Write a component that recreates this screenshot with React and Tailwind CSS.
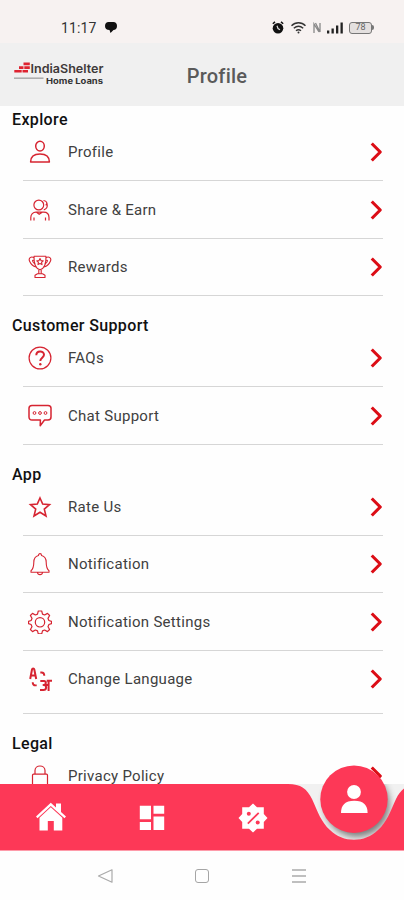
import { ChevronRight } from 'lucide-react';

const outline = {
  width: 24,
  height: 24,
  viewBox: '0 0 24 24',
  fill: 'none',
  stroke: 'currentColor',
  strokeWidth: 1.3,
  strokeLinejoin: 'round',
};

const icons = {
  profile: (
    <svg {...outline} strokeWidth="1.5">
      <ellipse cx="12" cy="6.1" rx="4.3" ry="4.9" />
      <path d="M2.6 22c0-5.2 3.6-8 9.4-8s9.4 2.8 9.4 8z" />
    </svg>
  ),
  share: (
    <svg {...outline} strokeWidth="1.2">
      <circle cx="10.8" cy="7" r="4.9" />
      <path d="M15.5 2.5c3.5.2 4.3 3.3 2.2 4.7M19 5.5c.7 3-.4 5.5-3.2 6.3" />
      <path d="M2.8 22.5v-3c0-3.2 2.2-5.3 5.2-5.3h7.5c3.4 0 5.5 2 5.5 5.3v3M6 22.5v-3M17.5 22.5v-3M8.5 14.3l2.7 2 3-2" />
    </svg>
  ),
  rewards: (
    <svg {...outline} strokeWidth="1.1">
      <path d="M6 1.2h12c.2 7-1.5 12.500-6 13.500-4.500-1-6.200-6.500-6-13.500z" />
      <path d="M6 2.700c-3-1.700-5.800.5-4.400 3.500 1 2.200 3.500 5 6.300 5.700M18 2.700c3-1.700 5.800.5 4.400 3.500-1 2.200-3.500 5-6.300 5.700" />
      <path d="M6 5.500c-2-.7-2.200.8 1 3.500M18 5.500c2-.7 2.200.8-1 3.500M10.800 14.700v4h2.400v-4M7 22.500v-2.200l2.500-1.600h5l2.500 1.600v2.200z" />
      <path d="M12 3.600l1 2 2.200.3-1.600 1.500.4 2.200-2-1-2 1 .4-2.200-1.600-1.500 2.200-.3z" />
    </svg>
  ),
  faqs: (
    <svg {...outline}>
      <circle cx="12" cy="12" r="10.900" strokeWidth="1.200" />
      <path d="M8.300 9.300c0-5 7.700-4.900 7.700-.5 0 2.900-3.700 3-3.700 6.200" strokeWidth="2" />
      <circle cx="12.300" cy="18.300" r="1.200" fill="currentColor" stroke="none" />
    </svg>
  ),
  chat: (
    <svg {...outline} strokeWidth="1.500">
      <path d="M4 1.500h16c1.800 0 3 1 3 2.800V13c0 1.800-1.200 3-3 3h-3.500l-4.300 5.700.2-5.700H4c-1.800 0-3-1.200-3-3V4.300c0-1.800 1.200-2.800 3-2.800z" />
      <g strokeWidth="1">
        <circle cx="6.500" cy="9" r="1.400" />
        <circle cx="12" cy="9" r="1.400" />
        <circle cx="17.500" cy="9" r="1.400" />
      </g>
    </svg>
  ),
  rate: (
    <svg {...outline} strokeWidth="1.600" strokeLinejoin="miter">
      <path d="M12 3l2.700 6 6.800.7-5.200 4.400 1.700 6.900-6-3.700L6 21l1.700-6.900-5.200-4.400 6.800-.7z" />
    </svg>
  ),
  bell: (
    <svg {...outline} strokeWidth="1.100">
      <path d="M10.500 3.500c0-2.500 3-2.500 3 0 3.300.8 4.700 3.400 4.700 6.800 0 4.200.3 6.500 2.800 8.400v1.600H3v-1.600c2.500-1.900 2.800-4.200 2.800-8.400 0-3.400 1.400-6 4.700-6.800zM9.500 20.500c.3 2.800 4.700 2.800 5 0" />
    </svg>
  ),
  settings: (
    <svg {...outline} strokeWidth="1.200">
      <path d="M10.300 1h3.400l.8 3.100 2.100.9 2.900-1.600 2.100 2.100L20 8.400l.9 2.100 2.600.9v2.200l-2.600.9-.9 2.200 1.600 2.800-2.100 2.100-2.900-1.600-2.100.9-.8 3h-3.400l-.8-3-2.100-.9-2.900 1.600-2.100-2.100L4 16.700l-.9-2.200-2.600-.9v-2.200l2.600-.9L4 8.400 2.400 5.500l2.100-2.100L7.400 5l2.100-.9z" />
      <circle cx="12" cy="12.300" r="4.700" />
    </svg>
  ),
  language: (
    <svg {...outline}>
      <path d="M2.200 12L4 2.500c.3-1.300 2-1.300 2.300 0L8.200 12M3 8.500h4.500" strokeWidth="2" />
      <path d="M12.300 5.500h1.200c2 0 2.800.9 2.800 3.300M4.700 15.200c0 2.200.8 3.200 2.800 3.200h1.200" strokeWidth="1.900" />
      <path d="M12.300 14h3.700c2.500 0 2.500 3.900-.5 3.900 3.500 0 3.500 5.100-.2 5.100h-3.300M17 18h3.500M20.600 24V13.800M18.700 13.800H24" strokeWidth="2" />
    </svg>
  ),
  lock: (
    <svg {...outline} strokeWidth="1.200">
      <rect x="4.500" y="10.200" width="15" height="13" rx="1" />
      <path d="M7 10V6.500c0-6 10-6 10 0V10" />
    </svg>
  ),
};

const sections = [
  {
    title: 'Explore',
    items: [
      { label: 'Profile', icon: icons.profile },
      { label: 'Share & Earn', icon: icons.share },
      { label: 'Rewards', icon: icons.rewards },
    ],
  },
  {
    title: 'Customer Support',
    items: [
      { label: 'FAQs', icon: icons.faqs },
      { label: 'Chat Support', icon: icons.chat },
    ],
  },
  {
    title: 'App',
    items: [
      { label: 'Rate Us', icon: icons.rate },
      { label: 'Notification', icon: icons.bell },
      { label: 'Notification Settings', icon: icons.settings },
      { label: 'Change Language', icon: icons.language, tall: true },
    ],
  },
  {
    title: 'Legal',
    items: [{ label: 'Privacy Policy', icon: icons.lock }],
  },
];

const StatusBar = () => (
  <div className="flex h-[43px] shrink-0 items-center justify-between bg-[#f7f2f1] pt-3 pr-[30px] pl-[61px]">
    <div className="flex items-center gap-[9px]">
      <span className="text-[14px] leading-4 tracking-[0.1px] text-[#333]">11:17</span>
      <svg width="12" height="11" viewBox="0 0 12 11">
        <path d="M3.500 0h5C10.500 0 12 1.500 12 4S10.500 8 8.500 8L5.500 11 4.500 8C1.500 8 0 6.500 0 4S1.500 0 3.500 0z" fill="#111" />
      </svg>
    </div>
    <div className="flex items-center">
      <svg width="12" height="13" viewBox="0 0 12 13">
        <circle cx="6" cy="7.200" r="5.300" fill="#111" />
        <path d="M.8 2.800L3 .9M11.200 2.800L9 .9" stroke="#111" strokeWidth="1.500" />
        <path d="M5 4.700l1 2.800 2 1.200" stroke="#ddd" strokeWidth="1.200" fill="none" />
      </svg>
      <svg className="ml-[7px]" width="15" height="12" viewBox="0 0 15 12" fill="none" stroke="#333" strokeWidth="1.400">
        <path d="M.5 3.800c4-4 10-4 14 0M2.800 6.300c3-2.600 6.400-2.600 9.400 0M5 8.700c1.600-1.300 3.400-1.300 5 0" />
        <circle cx="7.500" cy="10.500" r="1" fill="#333" stroke="none" />
      </svg>
      <svg className="ml-[7px]" width="8" height="12" viewBox="0 0 8 12" fill="none" stroke="#888" strokeWidth="1.300">
        <path d="M1 11V2l5 8M2.500 1L7 10V1" />
      </svg>
      <svg className="ml-[6px]" width="17" height="12" viewBox="0 0 17 12" fill="#222">
        <rect y="8.500" width="2.300" height="3" />
        <rect x="4.500" y="6.500" width="2.300" height="5" />
        <rect x="9" y="3.500" width="2.300" height="8" />
        <rect x="13.500" y=".5" width="2.300" height="11" />
      </svg>
      <div className="ml-[5px] flex h-[12px] w-[23px] items-center justify-center rounded-[3px] border border-[#777] bg-[#e4e0df] text-[9px] leading-none text-[#666]">
        78
      </div>
      <div className="h-[5px] w-[2px] rounded-r bg-[#777]" />
    </div>
  </div>
);

const Logo = () => (
  <svg width="92" height="30" viewBox="0 0 92 30">
    <path d="M10.500 1.500h6.300v2.700h-6.300zM6 5.200h4.500v2.700H6zM11.300 5.200h5.500v2.700h-5.500zM1.300 8.900h7.400v2.700H1.300zM9.500 8.900h5.500v2.700H9.500z" fill="#de2330" />
    <path d="M1 17.200h29.500" stroke="#aaa" strokeWidth="1.500" />
    <text x="17.500" y="11.600" textLength="73" lengthAdjust="spacingAndGlyphs" className="fill-[#3f3a3a] font-['Inter',sans-serif] text-[12px] font-semibold">
      IndiaShelter
    </text>
    <text x="33" y="23" textLength="57" lengthAdjust="spacingAndGlyphs" className="fill-[#333] font-['Inter',sans-serif] text-[8px] font-bold">
      Home Loans
    </text>
  </svg>
);

const Row = ({ item, first }) => (
  <div className={`ml-[23px] mr-[21px] border-b border-[#d6d6d6] ${first ? 'pt-[5px]' : 'pt-[15.5px]'} ${item.tall ? 'pb-[20.5px]' : 'pb-[15px]'}`}>
    <div className="flex h-[26px] items-center">
      <span className="ml-[5px] text-[#d62431]">{item.icon}</span>
      <span className="ml-[16px] flex-1 pt-px text-[15px] leading-[25px] tracking-[0.28px] text-[#404040]">{item.label}</span>
      <ChevronRight className="-mr-[10px] h-[34px] w-[34px] text-[#dc0d16]" strokeWidth={2.200} strokeLinecap="butt" />
    </div>
  </div>
);

const BottomNav = () => (
  <div className="relative h-[67px] shrink-0">
    <svg className="absolute bottom-0 left-0" width="404" height="90" viewBox="0 -23 404 90">
      <defs>
        <filter id="shade" x="-30%" y="-30%" width="160%" height="170%">
          <feGaussianBlur stdDeviation="3.500" />
        </filter>
        <clipPath id="bowl">
          <path d="M290 0h114v60H290z" />
        </clipPath>
      </defs>
      <path d="M290 0H404V58H290z" fill="#f1f1f1" />
      <g clipPath="url(#bowl)">
        <circle cx="357" cy="20.500" r="32.500" fill="#666" opacity=".85" filter="url(#shade)" />
      </g>
      <path
        d="M0 0H288C301 0 307 5 312 15C318 28 321 38 330 46C343 59 365 59 378 46C387 38 390 28 396 15C398 10.500 401 7 404 4.500V66.500H0z"
        fill="#fd3857"
      />
      <circle cx="354" cy="15.200" r="33.700" fill="#fd3857" />
      <circle cx="354" cy="8" r="6.900" fill="#fff" />
      <path d="M341 29c0-8 4-12.300 13.300-12.300S367.600 21 367.600 29z" fill="#fff" />
    </svg>
    <div className="relative flex h-full items-center">
      <svg className="mb-[3px] ml-[35px]" width="32" height="30" viewBox="0 0 32 30">
        <path d="M1 15.500L15.800 1.700l5.200 4.700V2.500h5v8.400l5 4.600-1.500 1.700L15.800 5 2.500 17.200z" fill="#fff" />
        <path d="M4.500 16.800L15.800 6.200l11.500 10.600v12.600h-8.500V20h-6v9.400H4.500z" fill="#fff" />
      </svg>
      <svg className="ml-[72px]" width="26" height="26" viewBox="0 0 26 26" fill="#fff">
        <path d="M.8.800h11.200v13.400H.8zM14.500.800h10.700v8H14.500zM.8 17h11.200v8H.8zM14.500 11.500h10.700V25H14.500z" />
      </svg>
      <svg className="ml-[73px]" width="30" height="30" viewBox="0 0 30 30">
        <path d="M15 .5l4 3.700h6.800V11l3.700 4-3.700 4v6.800H19l-4 3.700-4-3.700H4.200V19L.5 15l3.700-4V4.200H11z" fill="#fff" />
        <path d="M9.800 20.700L20.700 9.800" stroke="#fd3857" strokeWidth="1.800" />
        <circle cx="10.800" cy="10.800" r="2" fill="#fd3857" />
        <circle cx="19.700" cy="19.500" r="2" fill="#fd3857" />
      </svg>
    </div>
  </div>
);

const SystemBar = () => (
  <div className="flex h-[49px] shrink-0 items-center bg-[#fefefe]">
    <svg className="ml-[97px]" width="17" height="16" viewBox="0 0 17 16" fill="none" stroke="#aaa" strokeWidth="1.200" strokeLinejoin="round">
      <path d="M1.500 8L15 1.800v12.400z" />
    </svg>
    <div className="ml-[81px] h-[14px] w-[14px] rounded-[3px] border border-[#a5a5a5]" />
    <svg className="ml-[83px]" width="14" height="14" viewBox="0 0 14 14" stroke="#aaa" strokeWidth="1.400">
      <path d="M0 1h14M0 7h14M0 13h14" />
    </svg>
  </div>
);

const App = () => {
  return (
    <div className="flex h-[900px] w-[404px] flex-col overflow-hidden bg-[#fefefe] font-['Roboto',sans-serif]">
      <StatusBar />
      <header className="grid h-[63px] shrink-0 grid-cols-[1fr_auto_1fr] items-center bg-[#f0f0f0]">
        <div className="pt-[2px] pl-[13px]">
          <Logo />
        </div>
        <h1 className="pt-[3px] pl-[30px] text-[20px] font-medium tracking-[0.2px] text-[#5a5a5a]">Profile</h1>
      </header>

      <main className="min-h-0 flex-1 overflow-hidden">
        {sections.map((section, index) => (
          <section key={section.title} className={index === 0 ? '' : 'mt-[16px]'}>
            <h2 className="ml-3 text-[16px] leading-[28px] font-medium tracking-[0.36px] text-[#111]">{section.title}</h2>
            {section.items.map((item, i) => (
              <Row key={item.label} item={item} first={i === 0} />
            ))}
          </section>
        ))}
      </main>

      <BottomNav />
      <SystemBar />
    </div>
  );
};

export default App;
